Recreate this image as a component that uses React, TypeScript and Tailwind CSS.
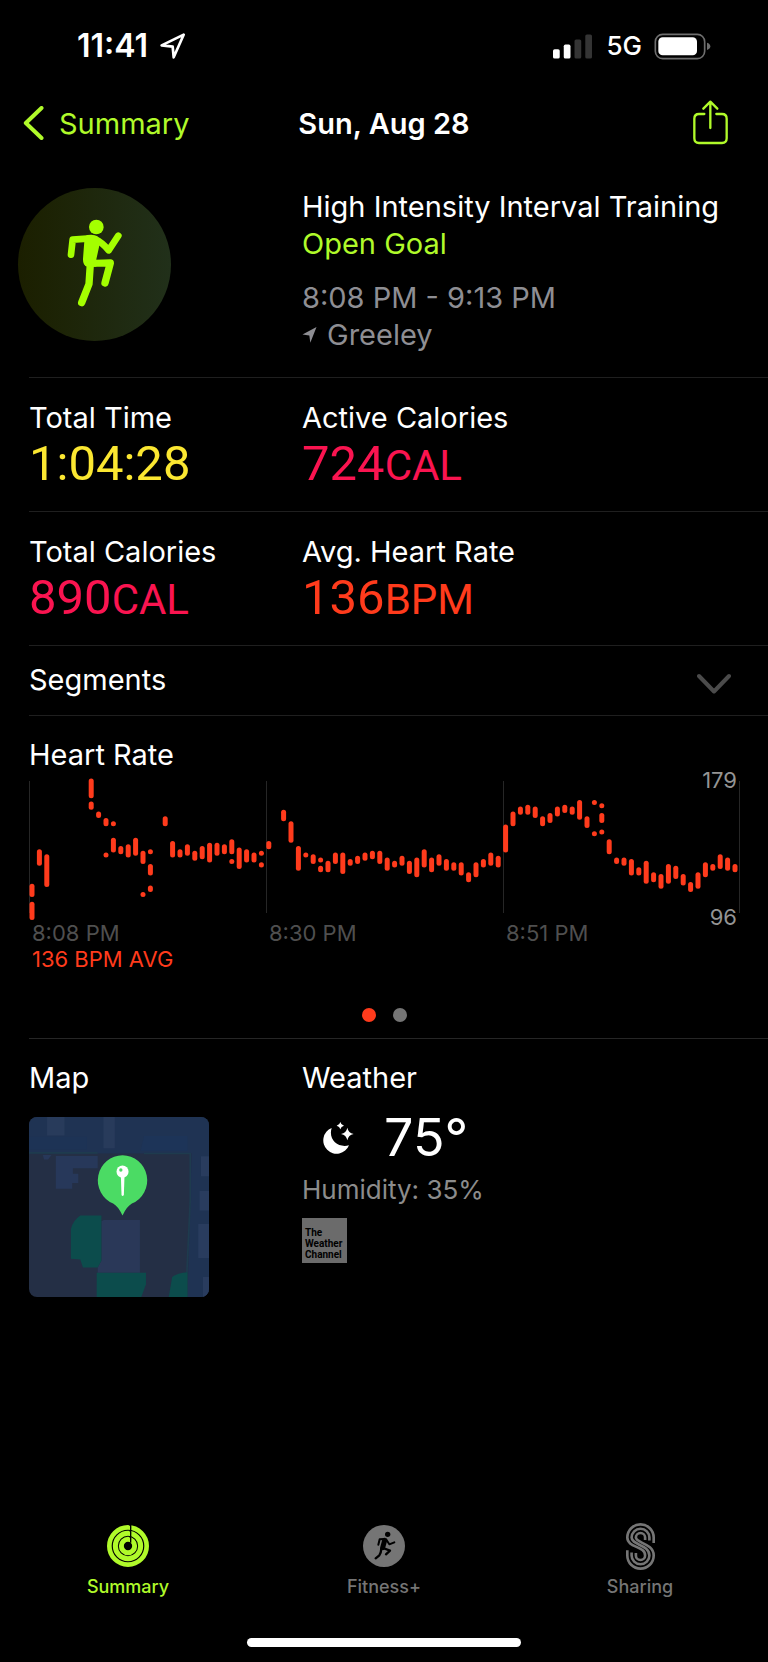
import React from 'react';

type Range = [low: number, high: number];

interface HeartSample {
    slot: number;
    ranges: Range[];
}

interface MetricProps {
    label: string;
    value: string;
    unit?: string;
    color: string;
}

const LOWEST_BPM = 96;
const HIGHEST_BPM = 179;

const heartSamples: HeartSample[] = [
    { slot: 0, ranges: [[96, 104], [110, 115]] },
    { slot: 1, ranges: [[129, 136]] },
    { slot: 2, ranges: [[116, 133]] },
    { slot: 8, ranges: [[163, 165], [170, 179]] },
    { slot: 9, ranges: [[158, 159]] },
    { slot: 10, ranges: [[134, 134], [153, 155]] },
    { slot: 11, ranges: [[137, 143], [153, 153]] },
    { slot: 12, ranges: [[136, 138]] },
    { slot: 13, ranges: [[134, 139]] },
    { slot: 14, ranges: [[135, 143]] },
    { slot: 15, ranges: [[110, 110], [130, 135]] },
    { slot: 16, ranges: [[113, 114], [123, 127], [136, 136]] },
    { slot: 18, ranges: [[153, 156]] },
    { slot: 19, ranges: [[134, 141]] },
    { slot: 20, ranges: [[134, 136]] },
    { slot: 21, ranges: [[135, 139]] },
    { slot: 22, ranges: [[132, 135]] },
    { slot: 23, ranges: [[133, 138]] },
    { slot: 24, ranges: [[131, 140]] },
    { slot: 25, ranges: [[135, 140]] },
    { slot: 26, ranges: [[136, 139]] },
    { slot: 27, ranges: [[130, 130], [136, 142]] },
    { slot: 28, ranges: [[127, 137]] },
    { slot: 29, ranges: [[131, 136]] },
    { slot: 30, ranges: [[131, 134]] },
    { slot: 31, ranges: [[128, 128], [135, 135]] },
    { slot: 32, ranges: [[139, 141]] },
    { slot: 34, ranges: [[156, 160]] },
    { slot: 35, ranges: [[143, 153]] },
    { slot: 36, ranges: [[126, 138]] },
    { slot: 37, ranges: [[134, 134]] },
    { slot: 38, ranges: [[130, 133]] },
    { slot: 39, ranges: [[125, 126], [131, 131]] },
    { slot: 40, ranges: [[125, 129]] },
    { slot: 41, ranges: [[130, 134]] },
    { slot: 42, ranges: [[124, 134]] },
    { slot: 43, ranges: [[129, 130]] },
    { slot: 44, ranges: [[130, 132]] },
    { slot: 45, ranges: [[132, 134]] },
    { slot: 46, ranges: [[133, 135]] },
    { slot: 47, ranges: [[130, 135]] },
    { slot: 48, ranges: [[126, 131]] },
    { slot: 49, ranges: [[128, 129]] },
    { slot: 50, ranges: [[129, 132]] },
    { slot: 51, ranges: [[124, 129]] },
    { slot: 52, ranges: [[122, 131]] },
    { slot: 53, ranges: [[128, 136]] },
    { slot: 54, ranges: [[125, 131]] },
    { slot: 55, ranges: [[129, 133]] },
    { slot: 56, ranges: [[126, 130]] },
    { slot: 57, ranges: [[126, 128]] },
    { slot: 58, ranges: [[123, 128]] },
    { slot: 59, ranges: [[119, 122]] },
    { slot: 60, ranges: [[122, 128]] },
    { slot: 61, ranges: [[128, 130]] },
    { slot: 62, ranges: [[129, 134]] },
    { slot: 63, ranges: [[128, 132]] },
    { slot: 64, ranges: [[137, 151]] },
    { slot: 65, ranges: [[153, 159]] },
    { slot: 66, ranges: [[160, 162]] },
    { slot: 67, ranges: [[160, 163]] },
    { slot: 68, ranges: [[158, 162]] },
    { slot: 69, ranges: [[153, 156]] },
    { slot: 70, ranges: [[155, 158]] },
    { slot: 71, ranges: [[159, 162]] },
    { slot: 72, ranges: [[161, 163]] },
    { slot: 73, ranges: [[160, 162]] },
    { slot: 74, ranges: [[157, 166]] },
    { slot: 75, ranges: [[152, 156]] },
    { slot: 76, ranges: [[147, 147], [166, 166]] },
    { slot: 77, ranges: [[148, 148], [155, 158], [164, 164]] },
    { slot: 78, ranges: [[136, 142]] },
    { slot: 79, ranges: [[130, 131]] },
    { slot: 80, ranges: [[129, 131]] },
    { slot: 81, ranges: [[123, 130]] },
    { slot: 82, ranges: [[123, 125]] },
    { slot: 83, ranges: [[118, 129]] },
    { slot: 84, ranges: [[119, 122]] },
    { slot: 85, ranges: [[115, 121]] },
    { slot: 86, ranges: [[118, 127]] },
    { slot: 87, ranges: [[121, 126]] },
    { slot: 88, ranges: [[117, 121]] },
    { slot: 89, ranges: [[113, 116]] },
    { slot: 90, ranges: [[115, 122]] },
    { slot: 91, ranges: [[122, 128]] },
    { slot: 92, ranges: [[126, 127]] },
    { slot: 93, ranges: [[127, 133]] },
    { slot: 94, ranges: [[126, 131]] },
    { slot: 95, ranges: [[125, 127]] },
];

const slotX = (slot: number) => 3 + slot * 7.4;
const bpmY = (bpm: number) => 5 + ((HIGHEST_BPM - bpm) / (HIGHEST_BPM - LOWEST_BPM)) * 136.5;

const StatusBar: React.FC = () => (
    <div className="flex items-center justify-between pt-[27px] pl-[77px] pr-[57px] text-white">
        <div className="flex items-center gap-3">
            <span className="text-[32px] leading-[38px] font-semibold">11:41</span>
            <svg viewBox="480 98 78 78" className="size-[26px]" fill="none" stroke="currentColor" strokeWidth="8" strokeLinejoin="round">
                <path d="M551 103 485 135 518 139 521 171Z" />
            </svg>
        </div>
        <div className="flex items-center">
            <svg viewBox="508 98 116 74" className="h-[25px] w-[39px]">
                <rect x="508" y="143" width="20" height="28" rx="5" fill="#fff" />
                <rect x="540" y="129" width="20" height="42" rx="5" fill="#fff" />
                <rect x="572" y="114" width="20" height="57" rx="5" fill="#343434" />
                <rect x="604" y="99" width="20" height="72" rx="5" fill="#343434" />
            </svg>
            <span className="ml-3.5 text-[26px] leading-[38px] font-medium">5G</span>
            <svg viewBox="808 95 171 81" className="ml-3 h-[27px] w-[57px]">
                <rect x="812" y="99" width="148" height="73" rx="22" fill="none" stroke="#6e6e6e" strokeWidth="5" />
                <rect x="821" y="108" width="116" height="54" rx="13" fill="#fff" />
                <path d="M967 124q10 3 10 11t-10 11Z" fill="#6e6e6e" />
            </svg>
        </div>
    </div>
);

const Header: React.FC = () => (
    <header className="grid grid-cols-[1fr_auto_1fr] items-center pt-[35px] pb-[18px]">
        <button className="flex items-center gap-[15px] justify-self-start pl-[23px] text-[#b0fa2a]">
            <svg viewBox="70 320 62 102" className="h-[34px] w-[21px]" fill="none" stroke="currentColor" strokeWidth="12" strokeLinecap="round" strokeLinejoin="round">
                <path d="M125 326 78 371 125 416" />
            </svg>
            <span className="text-[29px] leading-[37px]">Summary</span>
        </button>
        <h1 className="text-[29px] leading-[37px] font-semibold text-white">Sun, Aug 28</h1>
        <button aria-label="Share" className="justify-self-end pr-10 text-[#b0fa2a]">
            <svg viewBox="926 301 105 138" className="h-[46px] w-[35px]" fill="none" stroke="currentColor" strokeWidth="7" strokeLinecap="round" strokeLinejoin="round">
                <path d="M960 343H944Q930 343 930 357V416Q930 430 944 430H1013Q1027 430 1027 416V357Q1027 343 1013 343H996" />
                <path d="M978 306V385M957 327 978 306 999 327" />
            </svg>
        </button>
    </header>
);

const WorkoutBadge: React.FC = () => (
    <div className="-ml-[11px] flex size-[153px] items-center justify-center rounded-full bg-gradient-to-r from-[#1b1f00] to-[#21301a]">
        <svg viewBox="54 54 459 459" className="size-full" fill="none" stroke="#a4ff00" strokeLinecap="round" strokeLinejoin="round">
            <circle cx="289" cy="171" r="22" fill="#a4ff00" stroke="none" />
            <path d="M213 254 218 209 272 205" strokeWidth="20" />
            <path d="M285 208Q306 216 326 241L355 197" strokeWidth="20" />
            <path d="M262 195Q296 190 301 213L289 268V290H262Q248 288 249 266L254 200Z" fill="#a4ff00" stroke="none" />
            <path d="M264 278Q268 281 331 279L315 339" strokeWidth="22" />
            <path d="M271 282 267 342 245 398" strokeWidth="22" />
        </svg>
    </div>
);

const Metric: React.FC<MetricProps> = ({ label, value, unit, color }) => (
    <div>
        <dt className="text-[29px] leading-[37px] text-white">{label}</dt>
        <dd className={`font-[Roboto,sans-serif] text-[49px] leading-[56px] ${color}`}>
            {value}
            {unit && <span className="text-[42px] leading-none">{unit}</span>}
        </dd>
    </div>
);

const HeartRateChart: React.FC = () => (
    <svg viewBox="0 0 711 144" className="mt-[3px] block w-full overflow-visible" role="img" aria-label="Heart rate over time">
        {[0.5, 237.5, 474.5, 710.5].map(x => (
            <line key={x} x1={x} x2={x} y1="5" y2="137" stroke="#262626" strokeWidth="1" />
        ))}
        {heartSamples.map(({ slot, ranges }) =>
            ranges.map(([low, high]) => (
                <line
                    key={`${slot}-${low}`}
                    x1={slotX(slot)}
                    x2={slotX(slot)}
                    y1={bpmY(high)}
                    y2={bpmY(low) + 0.01}
                    stroke="#ff3b1c"
                    strokeWidth="5"
                    strokeLinecap="round"
                />
            ))
        )}
        <text x="708" y="12" textAnchor="end" fill="#949494" fontSize="22">{HIGHEST_BPM}</text>
        <text x="708" y="149" textAnchor="end" fill="#949494" fontSize="22">{LOWEST_BPM}</text>
    </svg>
);

const MapTile: React.FC = () => (
    <a href="#map" aria-label="Workout map" className="mt-[21px] block size-[180px] overflow-hidden rounded-lg">
        <svg viewBox="27 51 537 537" className="size-full">
            <rect x="27" y="51" width="537" height="537" fill="#242f45" />
            <path d="M27 51H564V588H500L512 160H27Z" fill="#1f3353" />
            <path d="M370 108H500V152H360Z" fill="#1d3458" />
            <path d="M27 110H200V148H27Z" fill="#1d3355" />
            <path d="M81 51H133V106H81ZM249 51H283V144H249Z" fill="#283b5b" />
            <path d="M540 168H564V228H540ZM536 272H564V330H536ZM532 370H564V472H532ZM546 528H564V588H546Z" fill="#293c5e" />
            <path d="M27 158H232M370 160H508V300L498 515" fill="none" stroke="#1e3b4e" strokeWidth="5" />
            <path d="M107 167H232V204H158V220H174V248H156V265H107Z" fill="#27385a" />
            <path d="M68 164H94L84 178H72Z" fill="#27385a" />
            <path d="M250 358H358V516H232V500L243 480V362Z" fill="#2a3858" />
            <path d="M180 345H243V480L232 500H188L180 476L152 474V385Q158 360 180 345Z" fill="#0c4c4c" />
            <path d="M229 516H376V550L362 588H229Z" fill="#0c4c4c" />
            <path d="M500 514V588H444L454 528Q470 516 500 514Z" fill="#0c4c4c" />
            <path d="M306 165A75 75 0 0 1 334 309Q318 318 306 345Q294 318 278 309A75 75 0 0 1 306 165Z" fill="#4bdb64" />
            <path d="M301 225H312L310 284Q306 290 303 284Z" fill="#fff" />
            <circle cx="306" cy="214" r="18" fill="#fff" />
            <circle cx="301" cy="209" r="5" fill="#4bdb64" />
        </svg>
    </a>
);

const MoonStars: React.FC = () => (
    <svg viewBox="966 509 96 99" className="h-[33px] w-8" fill="#fff">
        <path d="M995 527A40 40 0 1 0 1047 579C1014 588 984 562 995 527Z" />
        <path d="M1021 509Q1023 518 1032 520Q1023 522 1021 531Q1019 522 1010 520Q1019 518 1021 509Z" />
        <path d="M1042 526Q1045 542 1061 545Q1045 548 1042 564Q1039 548 1023 545Q1039 542 1042 526Z" />
    </svg>
);

const RingsIcon: React.FC = () => (
    <svg viewBox="140 75 126 126" className="size-[42px]" fill="none" stroke="currentColor">
        <circle cx="203" cy="138" r="56" strokeWidth="14" />
        <circle cx="203" cy="138" r="38" strokeWidth="15" />
        <circle cx="203" cy="138" r="20" strokeWidth="15" />
        <path d="M211 74V128" stroke="#000" strokeWidth="4" />
        <path d="M205 75Q213 76 211 84M206 92Q213 94 211 101M206 110Q213 112 211 119" stroke="#000" strokeWidth="2" />
    </svg>
);

const RunnerIcon: React.FC = () => (
    <svg viewBox="906 75 126 126" className="size-[42px]" fill="none" stroke="#000" strokeLinecap="round" strokeLinejoin="round">
        <circle cx="969" cy="138" r="63" fill="currentColor" stroke="none" />
        <circle cx="980" cy="103" r="8" fill="#000" stroke="none" />
        <path d="M952 134 956 118 970 117" strokeWidth="6" />
        <path d="M971 121 965 143" strokeWidth="15" />
        <path d="M976 119 985 133 1000 127" strokeWidth="6" />
        <path d="M966 144 987 152 975 163" strokeWidth="7" />
        <path d="M961 146Q960 160 955 166L944 175" strokeWidth="7" />
    </svg>
);

const SharingIcon: React.FC = () => (
    <svg viewBox="132 37 88 142" className="h-[47px] w-[29px]" fill="none" stroke="currentColor" strokeWidth="8">
        <path d="M216 97V81A40 40 0 0 0 136 81C136 112 190 106 190 135A14 14 0 0 1 162 135V128" />
        <path d="M203 90V81A27 27 0 0 0 149 81C149 104 203 102 203 135A27 27 0 0 1 149 135V126" />
        <path d="M190 88V81A14 14 0 0 0 162 81C162 98 216 98 216 135A40 40 0 0 1 136 135V119" />
    </svg>
);

const tabs = [
    { name: 'Summary', icon: <RingsIcon />, color: 'text-[#b0fa2a]' },
    { name: 'Fitness+', icon: <RunnerIcon />, color: 'text-[#757575]' },
    { name: 'Sharing', icon: <SharingIcon />, color: 'text-[#757575]' },
];

const TabBar: React.FC = () => (
    <nav className="mt-auto grid grid-cols-3 pt-8">
        {tabs.map(tab => (
            <a key={tab.name} href={`#${tab.name.toLowerCase()}`} className={`flex flex-col items-center gap-[5px] ${tab.color}`}>
                <span className="flex h-12 items-center">{tab.icon}</span>
                <span className="text-[18px] leading-6 font-medium">{tab.name}</span>
            </a>
        ))}
    </nav>
);

const App: React.FC = () => (
    <div className="flex min-h-screen flex-col bg-black font-[Inter,'Liberation_Sans',sans-serif] text-white">
        <StatusBar />
        <Header />

        <main className="pl-[29px]">
            <section className="grid grid-cols-[273px_1fr] border-b border-[#1f1f1f] py-6">
                <WorkoutBadge />
                <div className="text-[29px] leading-[37px]">
                    <h2>High Intensity Interval Training</h2>
                    <p className="text-[#b0fa2a]">Open Goal</p>
                    <p className="mt-[17px] text-[#8e8e93]">8:08 PM - 9:13 PM</p>
                    <p className="flex items-center gap-2.5 text-[#8e8e93]">
                        <svg viewBox="37 443 45 49" className="h-4 w-[15px]" fill="currentColor">
                            <path d="M81 443 38 466 59 469 62 491Z" />
                        </svg>
                        Greeley
                    </p>
                </div>
            </section>

            <dl className="grid grid-cols-[273px_1fr] border-b border-[#1f1f1f] pt-[21px] pb-[19px]">
                <Metric label="Total Time" value="1:04:28" color="text-[#fbe731]" />
                <Metric label="Active Calories" value="724" unit="CAL" color="text-[#fa1450]" />
            </dl>
            <dl className="grid grid-cols-[273px_1fr] border-b border-[#1f1f1f] pt-[21px] pb-[19px]">
                <Metric label="Total Calories" value="890" unit="CAL" color="text-[#fa1450]" />
                <Metric label="Avg. Heart Rate" value="136" unit="BPM" color="text-[#ff3b1c]" />
            </dl>

            <button className="flex w-full items-end justify-between border-b border-[#1f1f1f] pt-[15px] pr-[37px] pb-[17px]">
                <span className="text-[29px] leading-[37px]">Segments</span>
                <svg viewBox="0 0 34 28" className="h-7 w-[34px]" fill="none" stroke="#4b4b4b" strokeWidth="4" strokeLinecap="round" strokeLinejoin="round">
                    <path d="M2 6 17 21.5 32 6" />
                </svg>
            </button>

            <section className="border-b border-[#262626] pt-5 pb-4">
                <div className="pr-7">
                    <h2 className="text-[29px] leading-[37px]">Heart Rate</h2>
                    <HeartRateChart />
                    <div className="grid grid-cols-3 text-[22px] leading-[26px] text-[#4f4f4f]">
                        <span className="pl-[3px]">8:08 PM</span>
                        <span className="pl-[3px]">8:30 PM</span>
                        <span className="pl-[3px]">8:51 PM</span>
                    </div>
                    <p className="pl-[3px] text-[22px] leading-[26px] text-[#ff3b1c]">136 BPM AVG</p>
                </div>
                <div className="mt-9 flex justify-center gap-[17px] pr-[29px]">
                    <button aria-label="Heart rate page" className="size-3.5 rounded-full bg-[#ff3b1c]" />
                    <button aria-label="Recovery page" className="size-3.5 rounded-full bg-[#757575]" />
                </div>
            </section>

            <section className="grid grid-cols-[273px_1fr] pt-5">
                <div>
                    <h2 className="text-[29px] leading-[37px]">Map</h2>
                    <MapTile />
                </div>
                <div>
                    <h2 className="text-[29px] leading-[37px]">Weather</h2>
                    <div className="mt-2.5 flex items-center gap-[30px] pl-5">
                        <MoonStars />
                        <span className="text-[52px] leading-[64px]">75°</span>
                    </div>
                    <p className="mt-1 text-[26px] leading-8 text-[#8c8c8c]">Humidity: 35%</p>
                    <div className="mt-3 flex size-[45px] flex-col justify-end bg-[#6b6b6b] pb-[3px] pl-[3px] font-[Roboto,sans-serif] text-[10px] leading-[11px] font-bold text-black">
                        <span>The</span>
                        <span>Weather</span>
                        <span>Channel</span>
                    </div>
                </div>
            </section>
        </main>

        <TabBar />
        <div className="mx-auto mt-[39px] mb-[15px] h-[9px] w-[274px] rounded-full bg-white" />
    </div>
);

export default App;
